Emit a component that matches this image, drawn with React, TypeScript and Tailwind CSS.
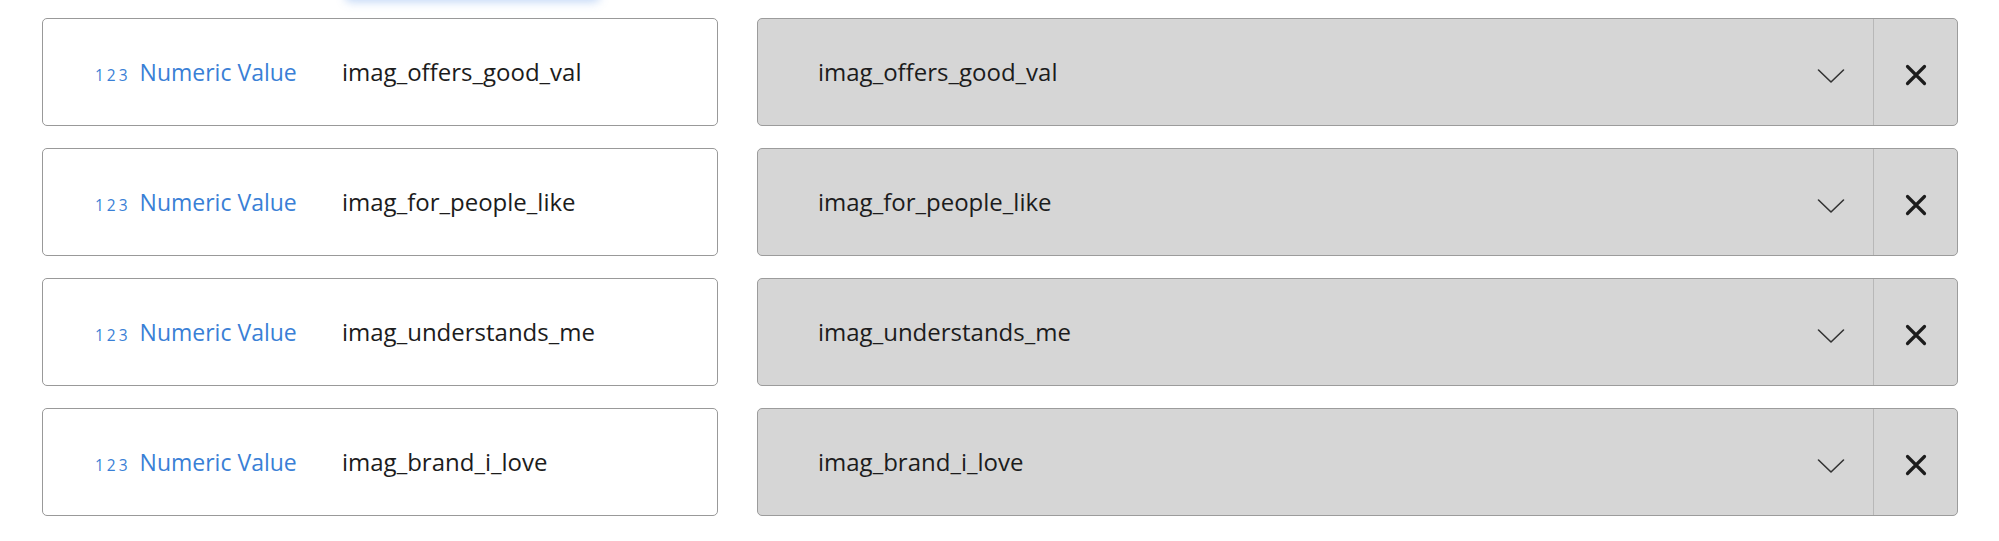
const fields = [
  'imag_offers_good_val',
  'imag_for_people_like',
  'imag_understands_me',
  'imag_brand_i_love',
];

function Chevron() {
  return (
    <svg width="28" height="16" viewBox="0 0 28 16" fill="none" className="mt-[8px]">
      <polyline points="1.5,2 14,14 26.5,2" stroke="#333" strokeWidth="1.6" strokeLinecap="round" strokeLinejoin="round" />
    </svg>
  );
}

function Cross() {
  return (
    <svg width="22" height="22" viewBox="0 0 22 22" fill="none" className="mt-[6px]">
      <path d="M2.5 2.5 L19.5 19.5 M19.5 2.5 L2.5 19.5" stroke="#1c1c1c" strokeWidth="3.2" strokeLinecap="round" />
    </svg>
  );
}

export default function App() {
  return (
    <div
      className="relative w-[1999px] h-[541px] bg-white overflow-hidden"
      style={{ fontFamily: '"Open Sans", "Liberation Sans", sans-serif' }}
    >
      {/* glow from the focused control above, cut off at the top */}
      <div className="absolute left-[345px] top-[-30px] w-[255px] h-[30px] rounded-md bg-white shadow-[0_2px_10px_rgba(80,140,230,0.35)]"></div>

      <div className="flex flex-col gap-[22px] pt-[18px] pl-[42px]">
        {fields.map((name) => (
          <div key={name} className="flex gap-[39px]">
            <div className="w-[676px] h-[108px] flex items-center pl-[52px] border-[1.5px] border-[#999] rounded-[5px] bg-white">
              <div className="w-[247px] flex items-baseline">
                <span className="text-[15.5px] tracking-[3px] text-[#3a7fd6] mr-[9px]">123</span>
                <span className="text-[23px] text-[#3a7fd6]">Numeric Value</span>
              </div>
              <span className="text-[24px] text-[#1c1c1c]">{name}</span>
            </div>

            <div className="w-[1201px] h-[108px] flex border-[1.5px] border-[#9c9c9c] rounded-[5px] bg-[#d6d6d6]">
              <div className="flex-1 flex items-center pl-[60px] pr-[28px]">
                <span className="flex-1 text-[24px] text-[#1c1c1c]">{name}</span>
                <Chevron />
              </div>
              <div className="w-[84px] flex items-center justify-center border-l border-[#b8b8b8]">
                <Cross />
              </div>
            </div>
          </div>
        ))}
      </div>
    </div>
  );
}
